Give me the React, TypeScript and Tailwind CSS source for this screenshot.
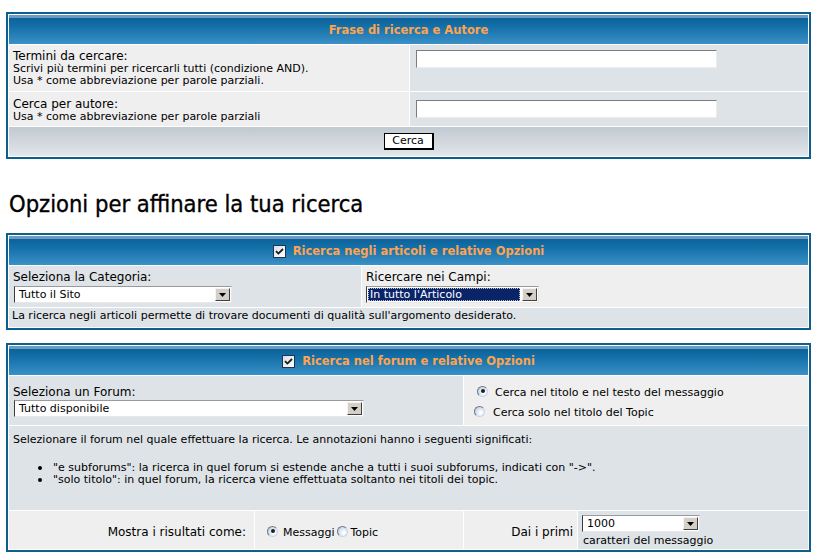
import React from "react";

const HEAD =
  "h-[29px] flex items-center justify-center gap-[7px] pt-[1px] bg-[linear-gradient(to_bottom,#6c9bc2_0px,#6c9bc2_3px,#0c629b_3px,#1470a8_40%,#3a90c7_100%)] text-[#ffa34f] font-bold text-[11.5px] leading-[14px]";

function Box({ children, className }: { children: React.ReactNode; className?: string }) {
  return (
    <div
      className={
        "w-[805px] border-2 border-[#0d5f8e] bg-white p-[1px] flex flex-col gap-[1px] " + (className ?? "")
      }
    >
      {children}
    </div>
  );
}

function Arrow() {
  return (
    <div className="w-[15px] h-full bg-[#d4d0c8] border border-t-[#f4f4f4] border-l-[#f4f4f4] border-b-[#404040] border-r-[#404040] flex items-center justify-center">
      <svg width="7" height="4" viewBox="0 0 7 4">
        <path d="M0 0h7L3.5 4z" fill="#000" />
      </svg>
    </div>
  );
}

function Select({ text, className, highlight }: { text: string; className: string; highlight?: boolean }) {
  return (
    <div
      className={
        "flex h-[17px] bg-white border border-t-[#9a9a9a] border-l-[#3c3c3c] border-r-[#e8e8e8] border-b-[#e8e8e8] p-[1px] " +
        className
      }
    >
      <div className="flex-1 flex pr-[2px]">
        <div
          className={
            highlight
              ? "flex-1 bg-[#0a246a] text-white text-[11px] leading-[13px] pl-[2px] outline outline-1 outline-dotted outline-[#c0c0c0] -outline-offset-1"
              : "flex-1 text-[11px] leading-[13px] pl-[3px]"
          }
        >
          {text}
        </div>
      </div>
      <Arrow />
    </div>
  );
}

function TextInput({ className }: { className?: string }) {
  return (
    <div
      className={
        "w-[301px] h-[18px] bg-white border border-t-[#7c7c7c] border-l-[#7c7c7c] border-b-[#ececec] border-r-[#ececec] " +
        (className ?? "")
      }
    />
  );
}

function Check() {
  return (
    <span className="inline-flex w-[13px] h-[13px] border border-[#1c3550] bg-[linear-gradient(135deg,#d8dde6,#ffffff)] items-center justify-center">
      <svg width="9" height="9" viewBox="0 0 9 9">
        <path d="M1 4.2 L3.4 6.6 L8 2" stroke="#1a1a1a" strokeWidth="1.8" fill="none" />
      </svg>
    </span>
  );
}

function Radio({ checked, className }: { checked?: boolean; className?: string }) {
  return (
    <span
      className={
        "inline-flex shrink-0 w-[11px] h-[11px] rounded-full border border-t-[#6b7787] border-l-[#6b7787] border-b-[#c9d6e6] border-r-[#c9d6e6] bg-[radial-gradient(circle_at_65%_65%,#ffffff_10%,#b7cbe2_90%)] items-center justify-center " +
        (className ?? "")
      }
    >
      {checked && <span className="w-[4px] h-[4px] rounded-full bg-[#1e1e1e]" />}
    </span>
  );
}

export default function App() {
  return (
    <div className="w-[820px] h-[559px] overflow-hidden bg-white text-black font-['DejaVu_Sans',sans-serif] pt-[12px] pl-[6px]">
      {/* Box 1 */}
      <Box>
        <div className={HEAD}>Frase di ricerca e Autore</div>
        <div className="grid grid-cols-[400px_398px] gap-[1px] h-[46px]">
          <div className="bg-[#efefef] pl-[4px] pt-[5px]">
            <div className="text-[12px] leading-[13px]">Termini da cercare:</div>
            <div className="text-[11px] leading-[12px]">
              Scrivi più termini per ricercarli tutti (condizione AND).
            </div>
            <div className="text-[11px] leading-[12px]">Usa * come abbreviazione per parole parziali.</div>
          </div>
          <div className="bg-[#dee3e7] pl-[6px] pt-[5px]">
            <TextInput />
          </div>
        </div>
        <div className="grid grid-cols-[400px_398px] gap-[1px] h-[34px]">
          <div className="bg-[#efefef] pl-[4px] pt-[6px]">
            <div className="text-[12px] leading-[13px]">Cerca per autore:</div>
            <div className="text-[11px] leading-[12px]">Usa * come abbreviazione per parole parziali</div>
          </div>
          <div className="bg-[#dee3e7] pl-[6px] pt-[8px]">
            <TextInput />
          </div>
        </div>
        <div className="h-[29px] bg-[linear-gradient(to_bottom,#c1c9d1,#dce1e5_85%,#e6eaed)] flex justify-center pt-[6px]">
          <div className="w-[50px] h-[17px] bg-white border border-black border-r-2 border-b-2 text-[11px] leading-[14px] flex justify-center">
            Cerca
          </div>
        </div>
      </Box>

      <h2 className="mt-[31px] mb-[15px] ml-[3px] h-[28px] text-[23.5px] leading-[28px] font-normal [-webkit-text-stroke:0.35px_#000] font-['DejaVu_Sans_Condensed','DejaVu_Sans',sans-serif]">
        Opzioni per affinare la tua ricerca
      </h2>

      {/* Box 2 */}
      <Box>
        <div className={HEAD}>
          <Check />
          <span>Ricerca negli articoli e relative Opzioni</span>
        </div>
        <div className="grid grid-cols-[352px_446px] gap-[1px] h-[41px]">
          <div className="bg-[#dee3e7] pl-[4px] pt-[4px]">
            <div className="text-[12px] leading-[14px]">Seleziona la Categoria:</div>
            <Select text="Tutto il Sito" className="w-[218px] mt-[2px] ml-[1px]" />
          </div>
          <div className="bg-[#efefef] pl-[4px] pt-[4px]">
            <div className="text-[12px] leading-[14px]">Ricercare nei Campi:</div>
            <Select text="In tutto l'Articolo" className="w-[173px] mt-[2px]" highlight />
          </div>
        </div>
        <div className="h-[19px] bg-[#dee3e7] pl-[3px] pt-[2px] text-[11px] leading-[12px]">
          La ricerca negli articoli permette di trovare documenti di qualità sull'argomento desiderato.
        </div>
      </Box>

      {/* Box 3 */}
      <Box className="mt-[13px]">
        <div className={HEAD}>
          <Check />
          <span>Ricerca nel forum e relative Opzioni</span>
        </div>
        <div className="grid grid-cols-[454px_344px] gap-[1px] h-[49px]">
          <div className="bg-[#dee3e7] pl-[4px] pt-[9px]">
            <div className="text-[12px] leading-[14px]">Seleziona un Forum:</div>
            <Select text="Tutto disponibile" className="w-[350px] mt-[1px] ml-[1px]" />
          </div>
          <div className="bg-[#efefef] pt-[7px] text-[11px]">
            <div className="h-[20px] flex items-center pl-[13px]">
              <Radio checked className="mb-[4px]" />
              <span className="ml-[7px] leading-[20px]">Cerca nel titolo e nel testo del messaggio</span>
            </div>
            <div className="h-[20px] flex items-center pl-[10px]">
              <Radio className="mb-[4px]" />
              <span className="ml-[8px] leading-[20px]">Cerca solo nel titolo del Topic</span>
            </div>
          </div>
        </div>
        <div className="h-[84px] bg-[#dee3e7] pl-[4px] pt-[8px] text-[11px] leading-[12px]">
          <div>
            Selezionare il forum nel quale effettuare la ricerca. Le annotazioni hanno i seguenti significati:
          </div>
          <ul className="mt-[16px]">
            <li className="flex items-center">
              <span className="w-[40px] flex justify-end pr-[11px]">
                <span className="w-[4px] h-[4px] rounded-full bg-black" />
              </span>
              <span>
                "e subforums": la ricerca in quel forum si estende anche a tutti i suoi subforums, indicati con
                "-&gt;".
              </span>
            </li>
            <li className="flex items-center">
              <span className="w-[40px] flex justify-end pr-[11px]">
                <span className="w-[4px] h-[4px] rounded-full bg-black" />
              </span>
              <span>"solo titolo": in quel forum, la ricerca viene effettuata soltanto nei titoli dei topic.</span>
            </li>
          </ul>
        </div>
        <div className="grid grid-cols-[245px_208px_113px_230px] gap-[1px] h-[38px]">
          <div className="bg-[#efefef] flex items-center justify-end pr-[8px] pt-[4px] text-[12px] leading-[14px]">
            Mostra i risultati come:
          </div>
          <div className="bg-[#efefef] flex items-center pl-[12px] pt-[5px] text-[11px] leading-[14px]">
            <Radio checked className="mb-[3px]" />
            <span className="ml-[5px]">Messaggi</span>
            <Radio className="ml-[3px] mb-[3px]" />
            <span className="ml-[2px]">Topic</span>
          </div>
          <div className="bg-[#efefef] flex items-center justify-end pr-[4px] pt-[3px] text-[12px] leading-[14px]">
            Dai i primi
          </div>
          <div className="bg-[#dee3e7] pl-[4px] pt-[4px]">
            <Select text="1000" className="w-[118px]" />
            <div className="text-[11px] leading-[12px] mt-[3px] ml-[1px]">caratteri del messaggio</div>
          </div>
        </div>
      </Box>
    </div>
  );
}
